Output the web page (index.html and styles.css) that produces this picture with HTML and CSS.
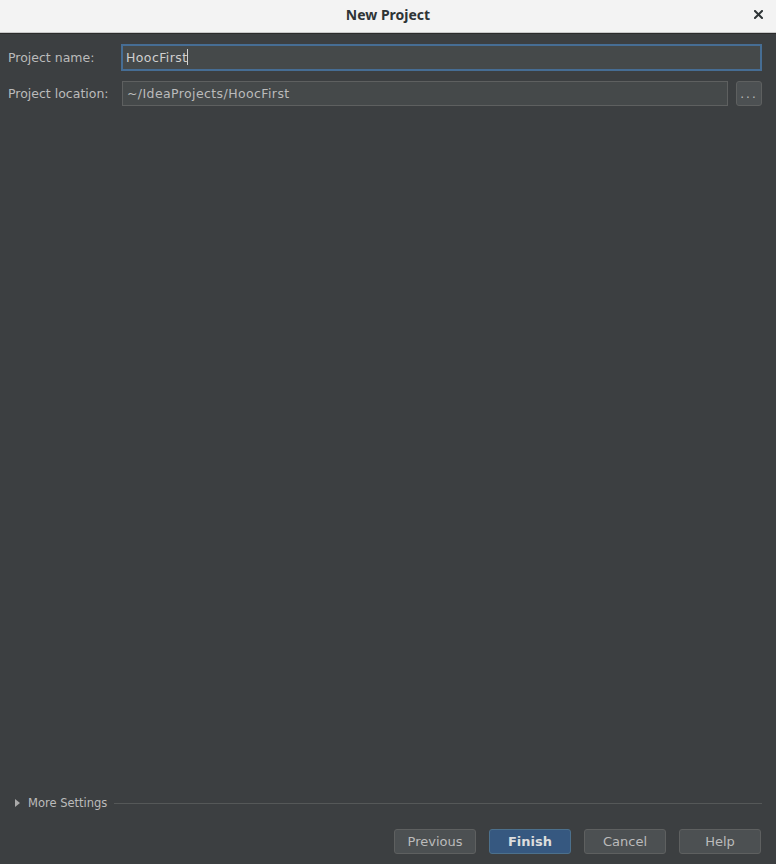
FILE: index.html
```html
<!DOCTYPE html>
<html lang="en">
  <head>
    <meta charset="UTF-8" />
    <title>New Project</title>
    <link rel="stylesheet" href="styles.css">
  </head>
  <body>
    <div class="dialog">
      <header class="titlebar">
        <div class="title">New Project</div>
        <button class="close-btn" aria-label="Close">
          <svg width="9" height="9" viewBox="0 0 9 9">
            <path d="M1 1 L8 8 M8 1 L1 8" stroke="#2e3436" stroke-width="2" stroke-linecap="square" />
          </svg>
        </button>
      </header>

      <main class="content">
        <div class="form-row">
          <label class="field-label" for="projectName">Project name:</label>
          <div class="field focused">HoocFirst<span class="caret"></span></div>
        </div>
        <div class="form-row">
          <label class="field-label" for="projectLocation">Project location:</label>
          <div class="field location">~/IdeaProjects/HoocFirst</div>
          <button class="browse-btn">...</button>
        </div>

        <div class="spacer"></div>

        <div class="more-settings">
          <span class="arrow"></span>
          <span class="more-label">More Settings</span>
          <span class="divider"></span>
        </div>

        <div class="buttons">
          <button class="btn">Previous</button>
          <button class="btn primary">Finish</button>
          <button class="btn">Cancel</button>
          <button class="btn">Help</button>
        </div>
      </main>
    </div>
  </body>
</html>
```

FILE: styles.css
```css
:root {
  --bg: #3c3f41;
  --field-bg: #45494a;
  --border: #5e6060;
  --text: #bbbbbb;
  --focus: #466d94;
}

html,
body {
  margin: 0;
  height: 100%;
}

body {
  font-family: "DejaVu Sans", sans-serif;
  font-size: 12.5px;
  color: var(--text);
  background-color: var(--bg);
}

.dialog {
  display: flex;
  flex-direction: column;
  height: 864px;
}

.titlebar {
  position: relative;
  height: 32px;
  background-color: #f3f3f3;
  border-bottom: 1px solid #c8c8c8;
  box-shadow: 0 1px 0 #2b2b2b;
  display: flex;
  align-items: center;
  justify-content: center;
}

.title {
  font-family: "Noto Sans", sans-serif;
  font-weight: bold;
  font-size: 14px;
  color: #2e3436;
  margin-bottom: 4px;
}

.close-btn {
  position: absolute;
  right: 13px;
  top: 10px;
  width: 9px;
  height: 9px;
  padding: 0;
  border: none;
  background: none;
  display: flex;
}

.content {
  flex: 1;
  display: flex;
  flex-direction: column;
  padding: 11px 14px 10px 8px;
}

.form-row {
  display: flex;
  align-items: center;
  margin-bottom: 10px;
}

.field-label {
  width: 113px;
  flex-shrink: 0;
  white-space: nowrap;
}

.field {
  flex: 1;
  height: 23px;
  line-height: 23px;
  padding: 0 4px;
  background-color: var(--field-bg);
  border: 1px solid var(--border);
  color: var(--text);
  letter-spacing: 0.4px;
  white-space: nowrap;
}

.field.focused {
  border: 2px solid var(--focus);
  padding: 0 3px;
  color: #d0d0d0;
}

.caret {
  display: inline-block;
  width: 1px;
  height: 16px;
  background-color: #d0d0d0;
  vertical-align: -3px;
}

.field.location {
  margin-left: 1px;
}

.browse-btn {
  width: 26px;
  height: 25px;
  margin-left: 8px;
  padding: 0 0 4px;
  background-color: #4c5052;
  border: 1px solid var(--border);
  border-radius: 3px;
  color: var(--text);
  font-family: "DejaVu Sans", sans-serif;
  font-size: 12px;
  letter-spacing: 2px;
  display: flex;
  align-items: flex-end;
  justify-content: center;
}

.spacer {
  flex: 1;
}

.more-settings {
  display: flex;
  align-items: center;
  padding-left: 7px;
  margin-bottom: 19px;
  font-size: 11.5px;
}

.arrow {
  width: 0;
  height: 0;
  border-top: 4px solid transparent;
  border-bottom: 4px solid transparent;
  border-left: 5px solid #aaaaaa;
  margin-right: 8px;
}

.more-label {
  white-space: nowrap;
}

.divider {
  flex: 1;
  height: 1px;
  background-color: #555858;
  margin-left: 7px;
}

.buttons {
  display: flex;
  justify-content: flex-end;
  gap: 13px;
  padding-right: 1px;
}

.btn {
  width: 82px;
  height: 25px;
  background-color: #4c5052;
  border: 1px solid var(--border);
  border-radius: 3px;
  color: var(--text);
  font-family: "DejaVu Sans", sans-serif;
  font-size: 13px;
}

.btn.primary {
  background-color: #365880;
  border-color: #4c708c;
  color: #dddddd;
  font-weight: bold;
}
```
